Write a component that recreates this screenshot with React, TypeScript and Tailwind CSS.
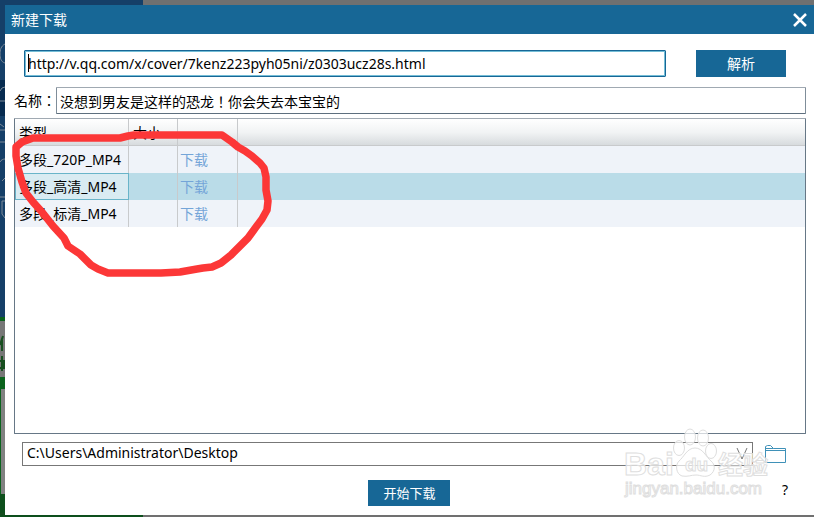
import { useState } from 'react'

interface Stream {
  name: string
  size: string
}

const streams: Stream[] = [
  { name: '多段_720P_MP4', size: '' },
  { name: '多段_高清_MP4', size: '' },
  { name: '多段_标清_MP4', size: '' },
]

// Dimmed main window that shows around the dialog's edges
function Backdrop() {
  return (
    <div className="absolute inset-0 flex bg-[#707070]" aria-hidden="true">
      <div className="w-[143px] flex flex-col">
        <div className="h-20 bg-[#153f68]" />
        <div className="h-9 bg-[#072b50]" />
        <div className="h-[201px] bg-[#153f68]" />
        <div className="h-1 bg-[#0b631d]" />
        <div className="h-14 bg-[#777777]" />
        <div className="h-3 bg-[#0b631d]" />
        <div className="h-[105px] bg-[#818181] border-l border-[#0b631d]" />
        <div className="flex-1 bg-[#0d4f1c]" />
      </div>
      <svg className="absolute left-0 top-0" width="5" height="517" fill="none" stroke="#7c8a98">
        <path d="M5 44C1 46 0 50 0 54s1 8 5 9M0 91l2-3 3-1M0 101h5M0 124l4 3M0 130h5M0 142h5M0 162c1-2 3-3 5-3M2 181l3-3M5 197H0M5 201H2v13l3 4" />
        <path d="M0 345l3-9M2 340v11M0 361h4v7H0M2 356v15M0 515c1-2 3-2 4 0" stroke="#174e1f" strokeWidth="2" />
      </svg>
      <div className="flex-1" />
    </div>
  )
}

function Scribble() {
  return (
    <svg
      className="absolute left-0 top-0 pointer-events-none"
      width="280"
      height="290"
      fill="none"
      stroke="#fc3737"
      strokeWidth="7.5"
      strokeLinecap="round"
      strokeLinejoin="round"
      aria-hidden="true"
    >
      <path d="M128 136L134 135H222L232 142L238 147L245 151L252 156L260 163L264 168L266 177L266 190L268 201L267 210L262 219L256 227L248 238L240 246L231 255L221 263L212 267L203 268L197 269L180 272L161 273H108L98 269L91 265L80 254L68 246L64 238L53 226L42 212L33 202L26 193L22 182L18 168L16 156L16 147L22 142L33 138H120L128 136" />
    </svg>
  )
}

function Watermark() {
  return (
    <svg
      className="absolute right-[38px] bottom-0 pointer-events-none"
      width="156"
      height="92"
      fill="#ffffff"
      fillOpacity="0.7"
      stroke="#dedede"
      strokeWidth="1"
      fontFamily='"Liberation Sans", "Noto Sans CJK SC", sans-serif'
      aria-hidden="true"
    >
      <text x="4" y="50" fontSize="32" fontWeight="700">Bai</text>
      <ellipse cx="59" cy="23" rx="5.5" ry="7.5" />
      <ellipse cx="70" cy="12" rx="5.5" ry="8" />
      <ellipse cx="83" cy="13" rx="5.5" ry="8" />
      <ellipse cx="91" cy="26" rx="5.5" ry="7.5" />
      <path d="M75 23C67 23 64 32 59 36C55 40 56 49 62 51C68 52 71 50 76 50C81 50 84 53 90 50C96 46 95 39 91 36C86 32 83 23 75 23Z" />
      <text x="65" y="46" fontSize="19" fontWeight="700">du</text>
      <text x="98" y="49" fontSize="25" fontWeight="700">经验</text>
      <text x="5" y="69" fontSize="17">jingyan.baidu.com</text>
    </svg>
  )
}

export default function App() {
  const [url, setUrl] = useState('http://v.qq.com/x/cover/7kenz223pyh05ni/z0303ucz28s.html')
  const [name, setName] = useState('没想到男友是这样的恐龙！你会失去本宝宝的')
  const [selected, setSelected] = useState(1)

  return (
    <div className="relative min-h-screen flex flex-col pl-[5px] pt-[5px] pb-0.5 text-sm text-black font-['Noto_Sans','Noto_Sans_CJK_SC',sans-serif]">
      <Backdrop />

      <main className="relative flex-1 flex flex-col bg-white">
        <header className="h-[29px] flex items-center justify-between pl-1.5 pr-1.5 bg-[#176796] text-white">
          <h1 className="leading-5">新建下载</h1>
          <button aria-label="关闭" className="w-4 h-4">
            <svg width="16" height="16" fill="none" stroke="currentColor" strokeWidth="2.5">
              <path d="M2 2l12 12M14 2L2 14" />
            </svg>
          </button>
        </header>

        <div className="flex gap-[30px] mt-4 ml-[19px] mr-7">
          <div className="relative flex-1 flex">
            <input
              aria-label="视频地址"
              value={url}
              onChange={(e) => setUrl(e.target.value)}
              className="flex-1 min-w-0 h-[27px] px-[3px] border border-[#176796] rounded-[1px] bg-white outline-none inset-ring inset-ring-[#74bdd6]"
            />
            <span className="absolute left-1 top-1 w-px h-[18px] bg-black" />
          </div>
          <button className="w-[90px] h-[27px] bg-[#176796] text-white leading-5">解析</button>
        </div>

        <div className="flex items-center mt-2.5 ml-[9px] mr-2 font-['Noto_Sans','Noto_Sans_CJK_TC',sans-serif]">
          <label htmlFor="name" lang="zh-TW" className="w-[42px] whitespace-nowrap">名称：</label>
          <input
            id="name"
            lang="zh-TW"
            value={name}
            onChange={(e) => setName(e.target.value)}
            className="flex-1 min-w-0 h-[27px] px-[3px] border border-t-[#a0a9b2] border-x-[#7f8d99] border-b-[#5e6f7e] rounded-[1px] bg-white outline-none"
          />
        </div>

        <div className="flex-1 mt-1 ml-[9px] mr-2 border border-[#667786] border-t-[#a0a9b2] rounded-[1px] overflow-hidden">
          <table className="w-full table-fixed border-separate border-spacing-0">
            <colgroup>
              <col className="w-[114px]" />
              <col className="w-[49px]" />
              <col className="w-[60px]" />
              <col />
            </colgroup>
            <thead>
              <tr className="h-[27px] bg-linear-to-b from-white via-[#f1f3f4] to-[#d5d9dc] text-left">
                <th className="p-0 pt-0.5 pl-1 font-normal border-r border-b border-[#c8cacc]">类型</th>
                <th className="p-0 pt-0.5 pl-1 font-normal border-r border-b border-[#c8cacc]">大小</th>
                <th className="p-0 border-r border-b border-[#c8cacc]" />
                <th className="p-0 border-b border-[#c8cacc]" />
              </tr>
            </thead>
            <tbody>
              {streams.map((s, i) => (
                <tr
                  key={s.name}
                  onClick={() => setSelected(i)}
                  className={i === selected ? 'h-[27px] bg-[#badce8]' : 'h-[27px] bg-[#eff3f9]'}
                >
                  <td
                    className={
                      i === selected
                        ? 'p-0 pl-[3px] whitespace-nowrap border border-[#69b4c9] bg-[#d9ebf2]'
                        : 'p-0 pl-1 whitespace-nowrap border-r border-[#c8cacc]'
                    }
                  >
                    {s.name}
                  </td>
                  <td className="p-0 border-r border-[#c8cacc]">{s.size}</td>
                  <td className="p-0 pl-0.5 border-r border-[#c8cacc]">
                    <a href="#" className="text-[#74a5d8]">下载</a>
                  </td>
                  <td className="p-0" />
                </tr>
              ))}
            </tbody>
          </table>
        </div>

        <div className="flex items-center mt-2 ml-[17px] mr-7">
          <div className="relative flex-1 flex">
            <select
              aria-label="保存位置"
              className="flex-1 h-6 pl-1 pb-0.5 border border-[#777777] bg-white appearance-none outline-none"
            >
              <option>C:\Users\Administrator\Desktop</option>
            </select>
            <svg
              className="absolute right-1 top-1 pointer-events-none"
              width="14"
              height="15"
              fill="none"
              stroke="#777777"
            >
              <path d="M2 2l5 11l5-11" />
            </svg>
          </div>
          <button aria-label="选择文件夹" className="ml-3 w-[21px] h-5">
            <svg width="21" height="20" fill="none" stroke="#3f91b8">
              <path d="M.5 18.5V2.5L2.5 1.5H5.5L8.5 4.5H20.5V18.5H.5M.5 6.5H20.5M.5 4.5H8.5" />
            </svg>
          </button>
        </div>

        <footer className="grid grid-cols-3 items-start mt-3.5 mb-[9px]">
          <button className="col-start-2 justify-self-center w-[82px] h-[26px] bg-[#176796] text-white text-[13px] leading-5">
            开始下载
          </button>
          <button aria-label="帮助" className="justify-self-end mr-[26px] leading-5">?</button>
        </footer>
      </main>

      <Watermark />
      <Scribble />
    </div>
  )
}
